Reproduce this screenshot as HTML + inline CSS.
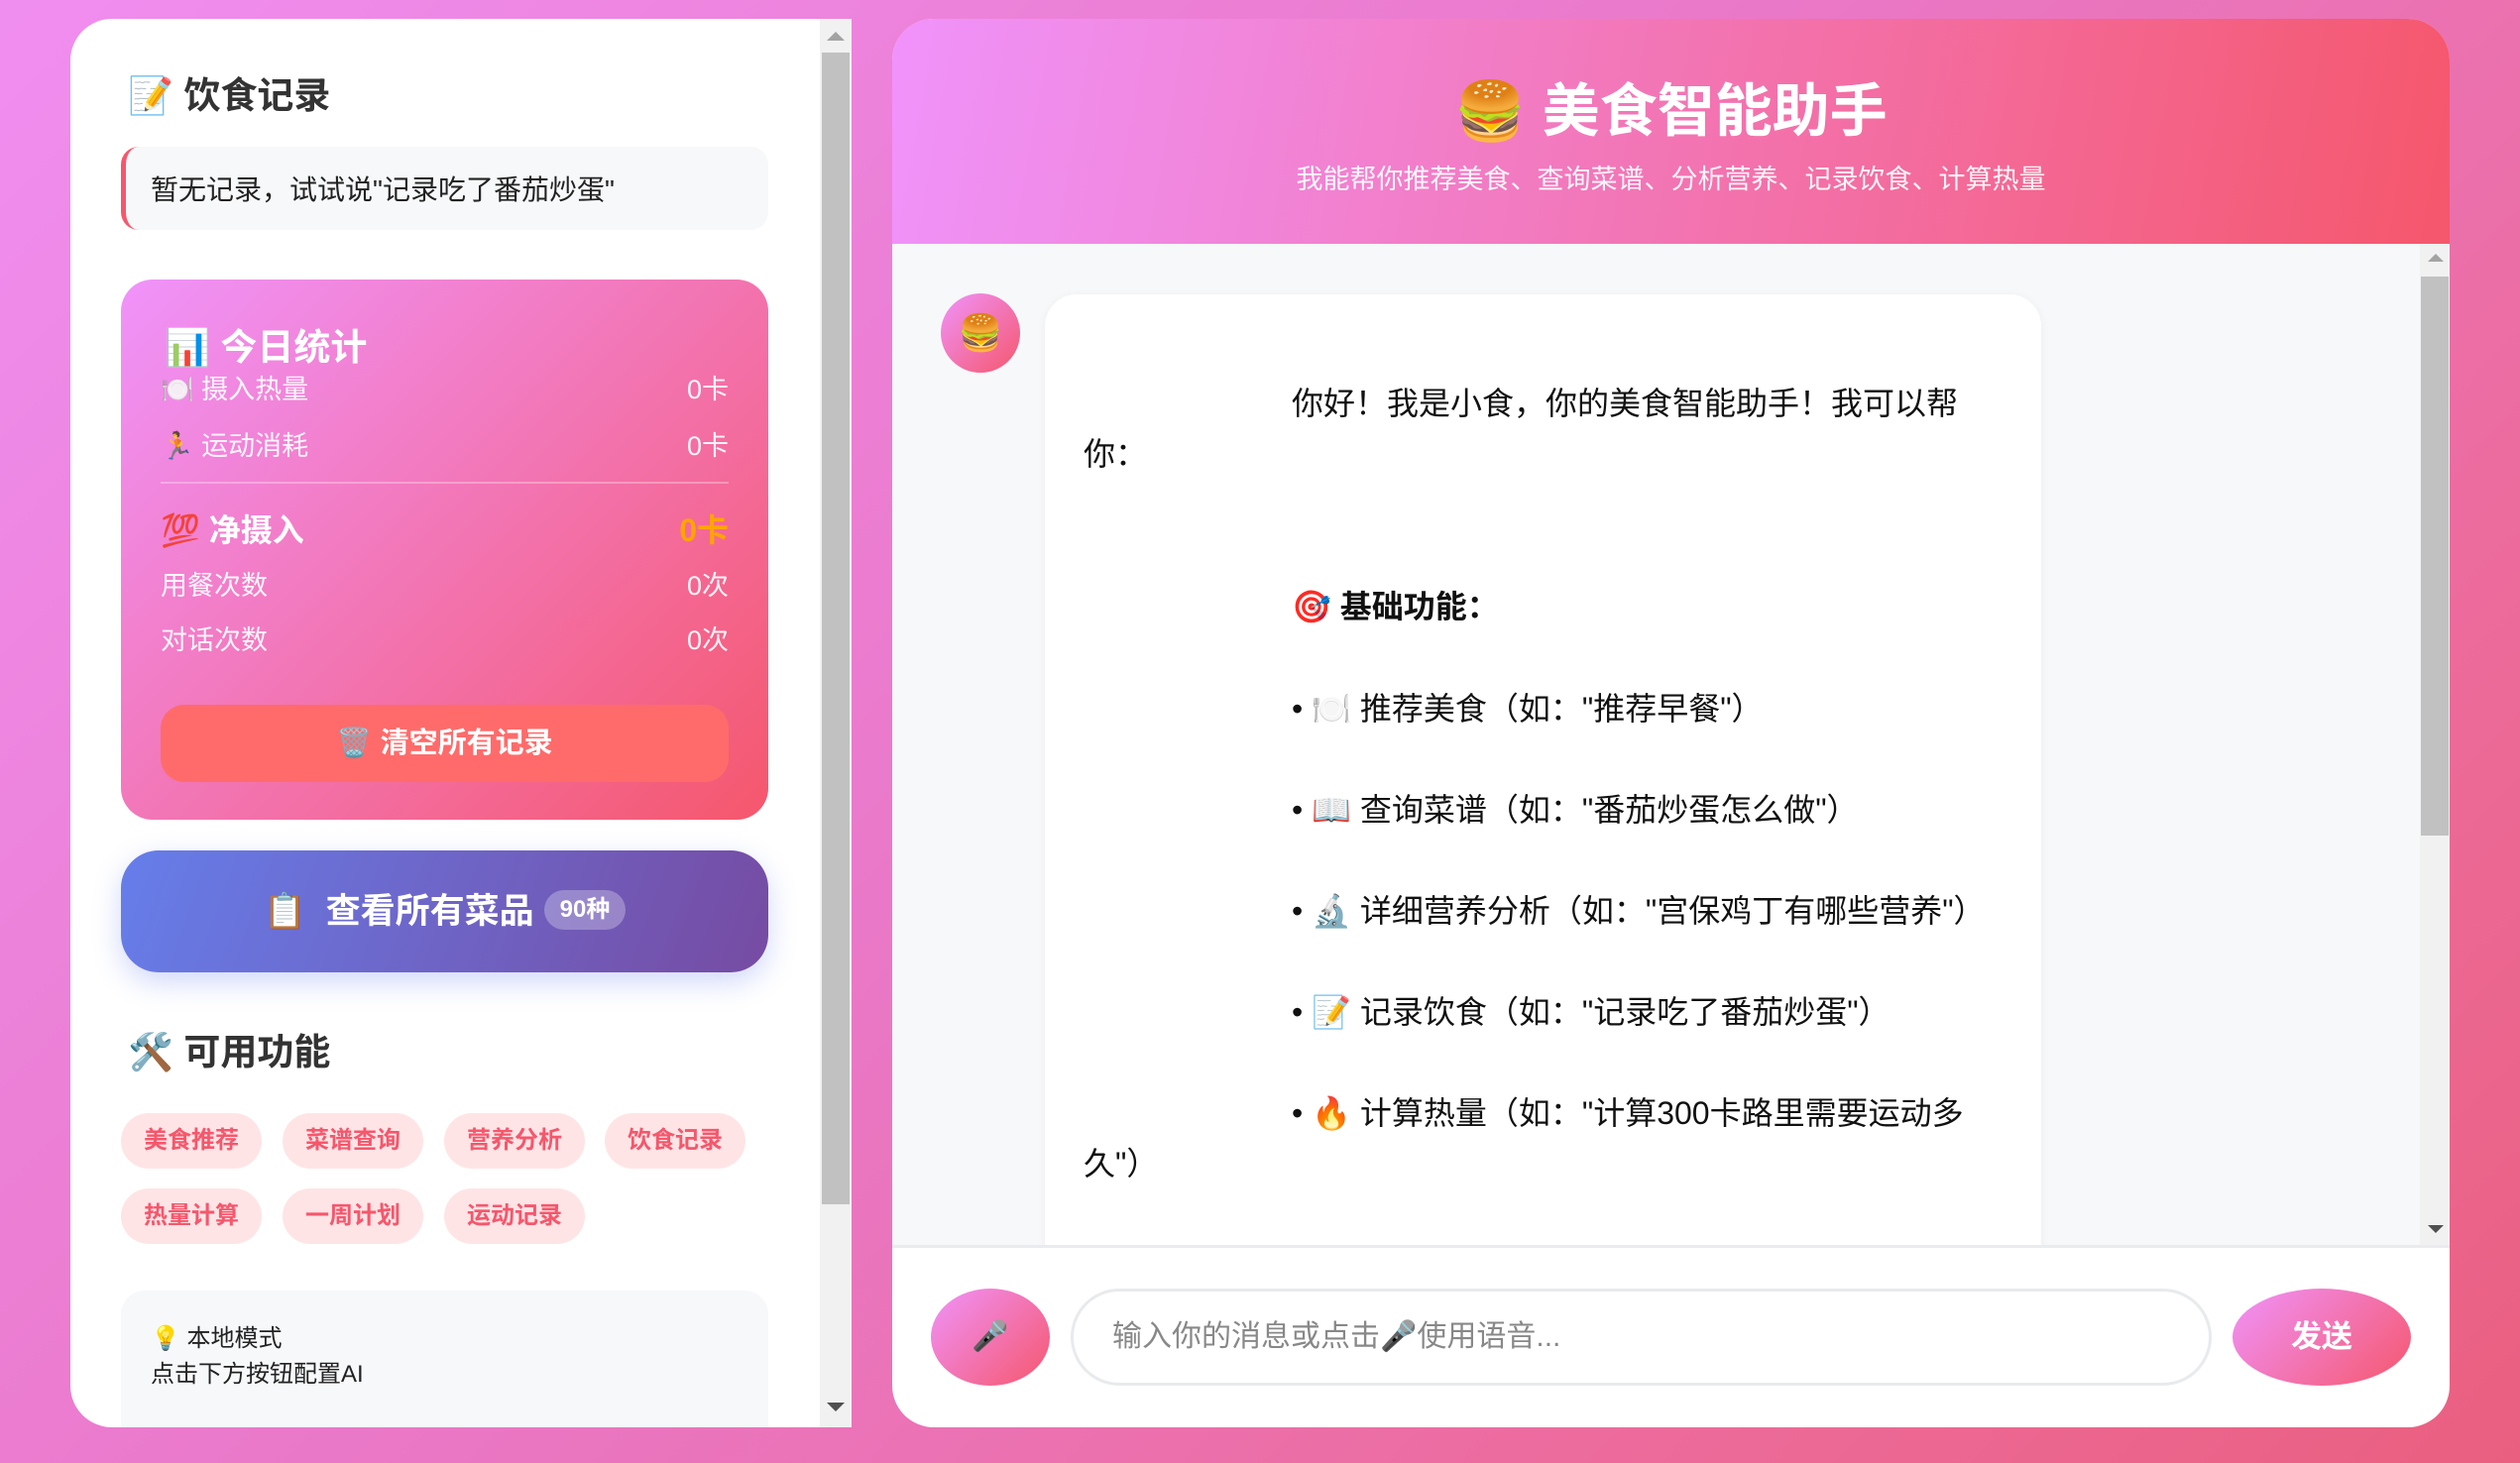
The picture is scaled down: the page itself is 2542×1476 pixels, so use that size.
<!DOCTYPE html>
<html><head><meta charset="utf-8"><style>
*{margin:0;padding:0;box-sizing:border-box}
body{width:2542px;height:1476px;overflow:hidden;background:linear-gradient(135deg,#f08ef0 0%,#ea78c8 45%,#ec6a98 80%,#ea5f80 100%);font-family:"Liberation Sans","Noto Sans CJK SC",sans-serif;position:relative}
.a{position:absolute}
.lp{left:71px;top:19px;width:788px;height:1421px;background:#fff;border-radius:42px 0 0 42px;overflow:hidden}
.h{font-weight:bold;font-size:37px;color:#333;white-space:nowrap}
.note{left:51px;top:129px;width:653px;height:84px;background:#f7f8fa;border-left:5px solid #f5576c;border-radius:18px;font-size:28px;color:#222;padding:22px 0 0 25px;white-space:nowrap}
.stat{left:51px;top:263px;width:653px;height:545px;border-radius:32px;background:linear-gradient(135deg,#f093fb,#f5576c);color:#fff}
.row{position:absolute;left:40px;right:40px;font-size:27px;color:rgba(255,255,255,.92);display:flex;justify-content:space-between;white-space:nowrap}
.clr{left:40px;top:429px;width:573px;height:78px;border-radius:24px;background:#ff6b6b;color:#fff;font-weight:bold;font-size:29px;text-align:center;line-height:78px}
.pur{left:51px;top:839px;width:653px;height:123px;border-radius:38px;background:linear-gradient(110deg,#667eea,#764ba2);box-shadow:0 10px 28px rgba(102,126,234,.3);color:#fff;font-weight:bold;font-size:35px;text-align:center;line-height:123px;white-space:nowrap}
.badge{display:inline-block;background:rgba(255,255,255,.28);border-radius:20px;font-size:24px;line-height:40px;padding:0 16px;vertical-align:middle;margin-left:10px;position:relative;top:-4px}
.tag{position:absolute;width:142px;height:56px;border-radius:28px;background:#ffe4e6;color:#f5576c;font-weight:bold;font-size:24px;text-align:center;line-height:56px}
.info{left:51px;top:1283px;width:653px;height:170px;background:#f7f8fa;border-radius:24px;font-size:24px;color:#222;padding:31px 0 0 30px;line-height:36px}
.sb{background:#f1f1f1}
.th{background:#c1c1c1}
.rp{left:900px;top:19px;width:1571px;height:1421px;background:#fff;border-radius:42px;overflow:hidden}
.hd{left:0;top:0;width:1571px;height:227px;background:linear-gradient(100deg,#f093fb,#f5576c);color:#fff;text-align:center}
.chat{left:0;top:227px;width:1571px;height:1010px;background:#f7f8fa;overflow:hidden}
.bub{left:154px;top:51px;width:1005px;height:1100px;background:#fff;border-radius:32px;box-shadow:0 2px 10px rgba(0,0,0,.05)}
.t{position:absolute;font-size:32px;color:#111;white-space:nowrap;line-height:51px}
</style></head><body>
<div class="a lp">
 <div class="a h" style="left:58px;top:47px">📝 饮食记录</div>
 <div class="a note">暂无记录，试试说"记录吃了番茄炒蛋"</div>
 <div class="a stat">
  <div class="a" style="left:44px;top:38px;font-size:37px;font-weight:bold;white-space:nowrap">📊 今日统计</div>
  <div class="row" style="top:89px"><span>🍽️ 摄入热量</span><span>0卡</span></div>
  <div class="row" style="top:146px"><span>🏃 运动消耗</span><span>0卡</span></div>
  <div class="a" style="left:40px;right:40px;top:204px;height:2px;background:rgba(255,255,255,.3)"></div>
  <div class="row" style="top:228px;font-size:32px;font-weight:bold;color:#fff"><span>💯 净摄入</span><span style="color:#ffa500">0卡</span></div>
  <div class="row" style="top:287px"><span>用餐次数</span><span>0次</span></div>
  <div class="row" style="top:342px"><span>对话次数</span><span>0次</span></div>
  <div class="a clr">🗑️ 清空所有记录</div>
 </div>
 <div class="a pur">📋 &nbsp;查看所有菜品<span class="badge">90种</span></div>
 <div class="a h" style="left:58px;top:1012px">🛠️ 可用功能</div>
 <div class="tag" style="left:51px;top:1104px">美食推荐</div>
 <div class="tag" style="left:214px;top:1104px">菜谱查询</div>
 <div class="tag" style="left:377px;top:1104px">营养分析</div>
 <div class="tag" style="left:539px;top:1104px">饮食记录</div>
 <div class="tag" style="left:51px;top:1180px">热量计算</div>
 <div class="tag" style="left:214px;top:1180px">一周计划</div>
 <div class="tag" style="left:377px;top:1180px">运动记录</div>
 <div class="a info">💡 本地模式<br>点击下方按钮配置AI</div>
 <div class="a sb" style="left:756px;top:0;width:32px;height:1421px"></div>
 <div class="a th" style="left:758px;top:34px;width:28px;height:1162px"></div>
 <div class="a" style="left:763px;top:13px;width:0;height:0;border-left:9px solid transparent;border-right:9px solid transparent;border-bottom:9px solid #a3a3a3"></div>
 <div class="a" style="left:763px;top:1396px;width:0;height:0;border-left:9px solid transparent;border-right:9px solid transparent;border-top:9px solid #505050"></div>
</div>
<div class="a rp">
 <div class="a hd">
  <div class="a" style="left:0;right:0;top:46px;font-size:58px;font-weight:bold">🍔 美食智能助手</div>
  <div class="a" style="left:0;right:0;top:140px;font-size:27px;color:rgba(255,255,255,.92)">我能帮你推荐美食、查询菜谱、分析营养、记录饮食、计算热量</div>
 </div>
 <div class="a chat">
  <div class="a" style="left:49px;top:50px;width:80px;height:80px;border-radius:50%;background:linear-gradient(135deg,#f093fb,#f5576c);text-align:center;line-height:80px;font-size:36px">🍔</div>
  <div class="a bub">
   <div class="t" style="left:249px;top:85px">你好！我是小食，你的美食智能助手！我可以帮</div>
   <div class="t" style="left:39px;top:136px">你：</div>
   <div class="t" style="left:249px;top:290px;font-weight:bold">🎯 基础功能：</div>
   <div class="t" style="left:249px;top:393px">• 🍽️ 推荐美食（如："推荐早餐"）</div>
   <div class="t" style="left:249px;top:495px">• 📖 查询菜谱（如："番茄炒蛋怎么做"）</div>
   <div class="t" style="left:249px;top:597px">• 🔬 详细营养分析（如："宫保鸡丁有哪些营养"）</div>
   <div class="t" style="left:249px;top:699px">• 📝 记录饮食（如："记录吃了番茄炒蛋"）</div>
   <div class="t" style="left:249px;top:801px">• 🔥 计算热量（如："计算300卡路里需要运动多</div>
   <div class="t" style="left:39px;top:852px">久"）</div>
  </div>
  <div class="a sb" style="left:1541px;top:0;width:30px;height:1010px"></div>
  <div class="a th" style="left:1542px;top:33px;width:28px;height:564px"></div>
  <div class="a" style="left:1549px;top:10px;width:0;height:0;border-left:8px solid transparent;border-right:8px solid transparent;border-bottom:8px solid #a3a3a3"></div>
  <div class="a" style="left:1549px;top:990px;width:0;height:0;border-left:8px solid transparent;border-right:8px solid transparent;border-top:8px solid #505050"></div>
 </div>
 <div class="a" style="left:0;top:1237px;width:1571px;height:3px;background:#e9ebee"></div>
 <div class="a" style="left:39px;top:1281px;width:120px;height:98px;border-radius:50%;background:linear-gradient(135deg,#f093fb,#f5576c);text-align:center;line-height:98px;font-size:30px">🎤</div>
 <div class="a" style="left:180px;top:1281px;width:1151px;height:98px;border:3px solid #e8eaed;border-radius:49px;font-size:30px;color:#888;line-height:92px;padding-left:39px">输入你的消息或点击🎤使用语音...</div>
 <div class="a" style="left:1352px;top:1281px;width:180px;height:98px;border-radius:50%;background:linear-gradient(135deg,#f093fb,#f5576c);color:#fff;font-weight:bold;font-size:31px;text-align:center;line-height:98px">发送</div>
</div>
</body></html>
